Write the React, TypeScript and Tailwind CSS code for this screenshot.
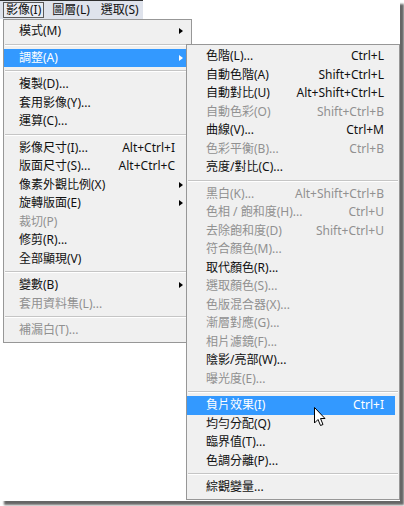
import React from "react";

type Item =
  | "sep"
  | { t: string; k?: string; arrow?: boolean; dis?: boolean; hl?: boolean };

const mainItems: Item[] = [
  { t: "模式(M)", arrow: true },
  "sep",
  { t: "調整(A)", arrow: true, hl: true },
  "sep",
  { t: "複製(D)..." },
  { t: "套用影像(Y)..." },
  { t: "運算(C)..." },
  "sep",
  { t: "影像尺寸(I)...", k: "Alt+Ctrl+I" },
  { t: "版面尺寸(S)...", k: "Alt+Ctrl+C" },
  { t: "像素外觀比例(X)", arrow: true },
  { t: "旋轉版面(E)", arrow: true },
  { t: "裁切(P)", dis: true },
  { t: "修剪(R)..." },
  { t: "全部顯現(V)" },
  "sep",
  { t: "變數(B)", arrow: true },
  { t: "套用資料集(L)...", dis: true },
  "sep",
  { t: "補漏白(T)...", dis: true },
];

const subItems: Item[] = [
  { t: "色階(L)...", k: "Ctrl+L" },
  { t: "自動色階(A)", k: "Shift+Ctrl+L" },
  { t: "自動對比(U)", k: "Alt+Shift+Ctrl+L" },
  { t: "自動色彩(O)", k: "Shift+Ctrl+B", dis: true },
  { t: "曲線(V)...", k: "Ctrl+M" },
  { t: "色彩平衡(B)...", k: "Ctrl+B", dis: true },
  { t: "亮度/對比(C)..." },
  "sep",
  { t: "黑白(K)...", k: "Alt+Shift+Ctrl+B", dis: true },
  { t: "色相 / 飽和度(H)...", k: "Ctrl+U", dis: true },
  { t: "去除飽和度(D)", k: "Shift+Ctrl+U", dis: true },
  { t: "符合顏色(M)...", dis: true },
  { t: "取代顏色(R)..." },
  { t: "選取顏色(S)...", dis: true },
  { t: "色版混合器(X)...", dis: true },
  { t: "漸層對應(G)...", dis: true },
  { t: "相片濾鏡(F)...", dis: true },
  { t: "陰影/亮部(W)..." },
  { t: "曝光度(E)...", dis: true },
  "sep",
  { t: "負片效果(I)", k: "Ctrl+I", hl: true },
  { t: "均勻分配(Q)" },
  { t: "臨界值(T)..." },
  { t: "色調分離(P)..." },
  "sep",
  { t: "綜觀變量..." },
];

function Sep() {
  return (
    <div className="h-[8px] flex flex-col justify-center px-[1px]">
      <div className="h-[1px] bg-[#c5c5c5]" />
      <div className="h-[1px] bg-white" />
    </div>
  );
}

function Row({
  it,
  pl,
  pr,
  hlRight,
}: {
  it: Exclude<Item, "sep">;
  pl: string;
  pr: string;
  hlRight: string;
}) {
  const color = it.hl ? "text-white" : it.dis ? "text-[#919191]" : "text-[#111111]";
  return (
    <div className={`relative h-[18.5px] flex items-center ${pl} ${pr} ${color}`}>
      {it.hl && <div className={`absolute left-0 top-0 bottom-0 ${hlRight} bg-[#3399ff]`} />}
      <span className="relative whitespace-nowrap">{it.t}</span>
      {it.k && <span className="relative ml-auto whitespace-nowrap">{it.k}</span>}
      {it.arrow && (
        <span
          className={`absolute right-[8px] top-[6px] w-0 h-0 border-y-[3.5px] border-y-transparent border-l-[4px] ${
            it.hl ? "border-l-white" : "border-l-black"
          }`}
        />
      )}
    </div>
  );
}

export default function App() {
  return (
    <div
      className="w-[404px] h-[506px] bg-white overflow-hidden text-[12px] leading-none"
      style={{ fontFamily: '"Noto Sans", "Noto Sans CJK TC", sans-serif' }}
    >
      <div className="relative w-[400px] h-[501px] bg-white shadow-[4px_4px_2px_rgba(0,0,0,0.6)]">
        {/* Menu bar */}
        <div className="w-[143px] h-[19px] bg-[#dfe3ec] border-t border-[#2e2e2e] flex items-center text-[#111111]">
          <div className="ml-[3px] h-[16px] px-[2px] flex items-center border border-[#5a5a5a] bg-[#e9ecf3]">
            影像(I)
          </div>
          <div className="ml-[8px]">圖層(L)</div>
          <div className="ml-[11px]">選取(S)</div>
        </div>

        {/* Main menu */}
        <div className="absolute left-[3px] top-[19px] w-[189px] bg-[#f0f0f0] border border-[#979797] py-[2px]">
          {mainItems.map((it, i) =>
            it === "sep" ? (
              <Sep key={i} />
            ) : (
              <Row key={i} it={it} pl="pl-[15px]" pr="pr-[16px]" hlRight="right-0" />
            )
          )}
        </div>

        {/* Submenu */}
        <div className="absolute left-[186px] top-[44px] w-[214px] bg-[#f0f0f0] border border-[#979797] py-[2px]">
          {subItems.map((it, i) =>
            it === "sep" ? (
              <Sep key={i} />
            ) : (
              <Row key={i} it={it} pl="pl-[19px]" pr="pr-[15px]" hlRight="right-[4px]" />
            )
          )}
        </div>

        {/* Mouse cursor */}
        <svg
          className="absolute left-[314px] top-[407px]"
          width="13"
          height="20"
          viewBox="0 0 13 20"
        >
          <path
            d="M0.5 0.5 L0.5 16 L4 12.5 L6.5 18.5 L9 17.5 L6.5 11.5 L11 11.5 Z"
            fill="white"
            stroke="black"
            strokeWidth="1"
            strokeLinejoin="miter"
          />
        </svg>
      </div>
    </div>
  );
}
